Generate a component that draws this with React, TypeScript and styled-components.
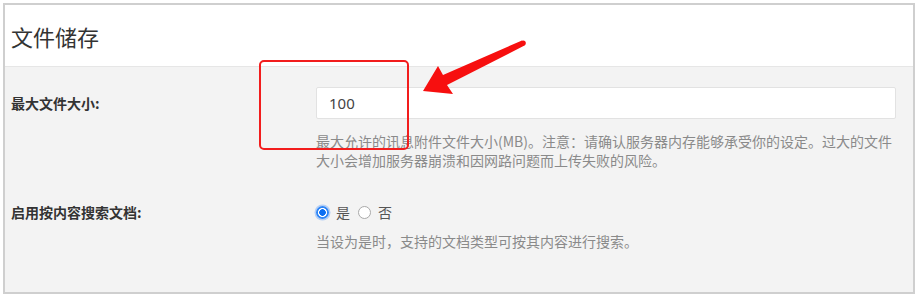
import React from "react";
import styled, { createGlobalStyle } from "styled-components";

const GlobalStyle = createGlobalStyle`
  html, body {
    margin: 0;
    padding: 0;
    background: #ffffff;
  }
  body {
    font-family: "Noto Sans", "Noto Sans CJK SC", sans-serif;
  }
`;

const Page = styled.div`
  position: relative;
  width: 920px;
  height: 300px;
  padding: 3px;
  box-sizing: border-box;
`;

const Panel = styled.section`
  display: flex;
  flex-direction: column;
  width: 912px;
  height: 291px;
  box-sizing: border-box;
  border: 2px solid #cfcfcf;
  background: #f3f3f3;
`;

const PanelHeader = styled.header`
  display: flex;
  align-items: center;
  height: 61px;
  padding-left: 6px;
  background: #ffffff;
  border-bottom: 1px solid #e6e6e6;
`;

const Title = styled.h2`
  margin: 0;
  font-family: "Noto Sans CJK SC", sans-serif;
  font-size: 22px;
  font-weight: 400;
  color: #333333;
`;

const PanelBody = styled.div`
  display: flex;
  flex-direction: column;
  gap: 32px;
  padding: 20px 17px 0 6px;
`;

const Row = styled.div`
  display: grid;
  grid-template-columns: 305px 580px;
`;

const Label = styled.label<{ $h: number }>`
  height: ${(p) => p.$h}px;
  line-height: ${(p) => p.$h}px;
  font-family: "Noto Sans CJK SC", sans-serif;
  font-size: 14px;
  font-weight: 700;
  color: #333333;
`;

const Field = styled.div`
  display: flex;
  flex-direction: column;
`;

const TextInput = styled.input`
  box-sizing: border-box;
  width: 580px;
  height: 32px;
  padding: 0 12px;
  border: 1px solid #e2e2e2;
  border-radius: 2px;
  background: #ffffff;
  font-family: "Noto Sans", sans-serif;
  font-size: 15px;
  color: #444444;
  outline: none;
`;

const Help = styled.p<{ $top: number }>`
  margin: ${(p) => p.$top}px 0 0;
  font-family: "Noto Sans CJK SC", sans-serif;
  font-size: 14px;
  line-height: 19px;
  color: #8a8a8a;
`;

const RadioGroup = styled.div`
  display: flex;
  align-items: center;
  height: 20px;
  gap: 8px;
`;

const RadioOption = styled.span`
  display: inline-flex;
  align-items: center;
  gap: 7px;
  font-family: "Noto Sans CJK SC", sans-serif;
  font-size: 14px;
  color: #555555;
`;

const RadioDot = styled.span<{ $on?: boolean }>`
  display: inline-block;
  width: 13px;
  height: 13px;
  box-sizing: border-box;
  border-radius: 50%;
  ${(p) =>
    p.$on
      ? `
    background: radial-gradient(circle, #0b6ef2 0 3px, #ffffff 3.6px 4.2px, #2f86f7 4.8px);
    box-shadow: 0 0 0 1.5px rgba(90, 155, 250, 0.4);
  `
      : `
    background: #ffffff;
    border: 1px solid #a9a9a9;
  `}
`;

const Highlight = styled.div`
  position: absolute;
  left: 259px;
  top: 60px;
  width: 150px;
  height: 90px;
  box-sizing: border-box;
  border: 2px solid #f21d1d;
  border-radius: 5px;
`;

const ArrowLayer = styled.svg`
  position: absolute;
  left: 0;
  top: 0;
  pointer-events: none;
`;

export default function App() {
  return (
    <>
      <GlobalStyle />
      <Page>
        <Panel>
          <PanelHeader>
            <Title>文件储存</Title>
          </PanelHeader>
          <PanelBody>
            <Row>
              <Label $h={32}>最大文件大小:</Label>
              <Field>
                <TextInput defaultValue="100" />
                <Help $top={13}>
                  最大允许的讯息附件文件大小(MB)。注意：请确认服务器内存能够承受你的设定。过大的文件大小会增加服务器崩溃和因网路问题而上传失败的风险。
                </Help>
              </Field>
            </Row>
            <Row>
              <Label $h={20}>启用按内容搜索文档:</Label>
              <Field>
                <RadioGroup>
                  <RadioOption>
                    <RadioDot $on />是
                  </RadioOption>
                  <RadioOption>
                    <RadioDot />否
                  </RadioOption>
                </RadioGroup>
                <Help $top={10}>当设为是时，支持的文档类型可按其内容进行搜索。</Help>
              </Field>
            </Row>
          </PanelBody>
        </Panel>
        <Highlight />
        <ArrowLayer width="920" height="300" viewBox="0 0 920 300">
          <polygon
            points="522,40.5 443,75 438,66 423,91 453,94 447,85 524.5,45.5"
            fill="#f70f0f"
          />
          <circle cx="523.2" cy="43" r="2.6" fill="#f70f0f" />
        </ArrowLayer>
      </Page>
    </>
  );
}
